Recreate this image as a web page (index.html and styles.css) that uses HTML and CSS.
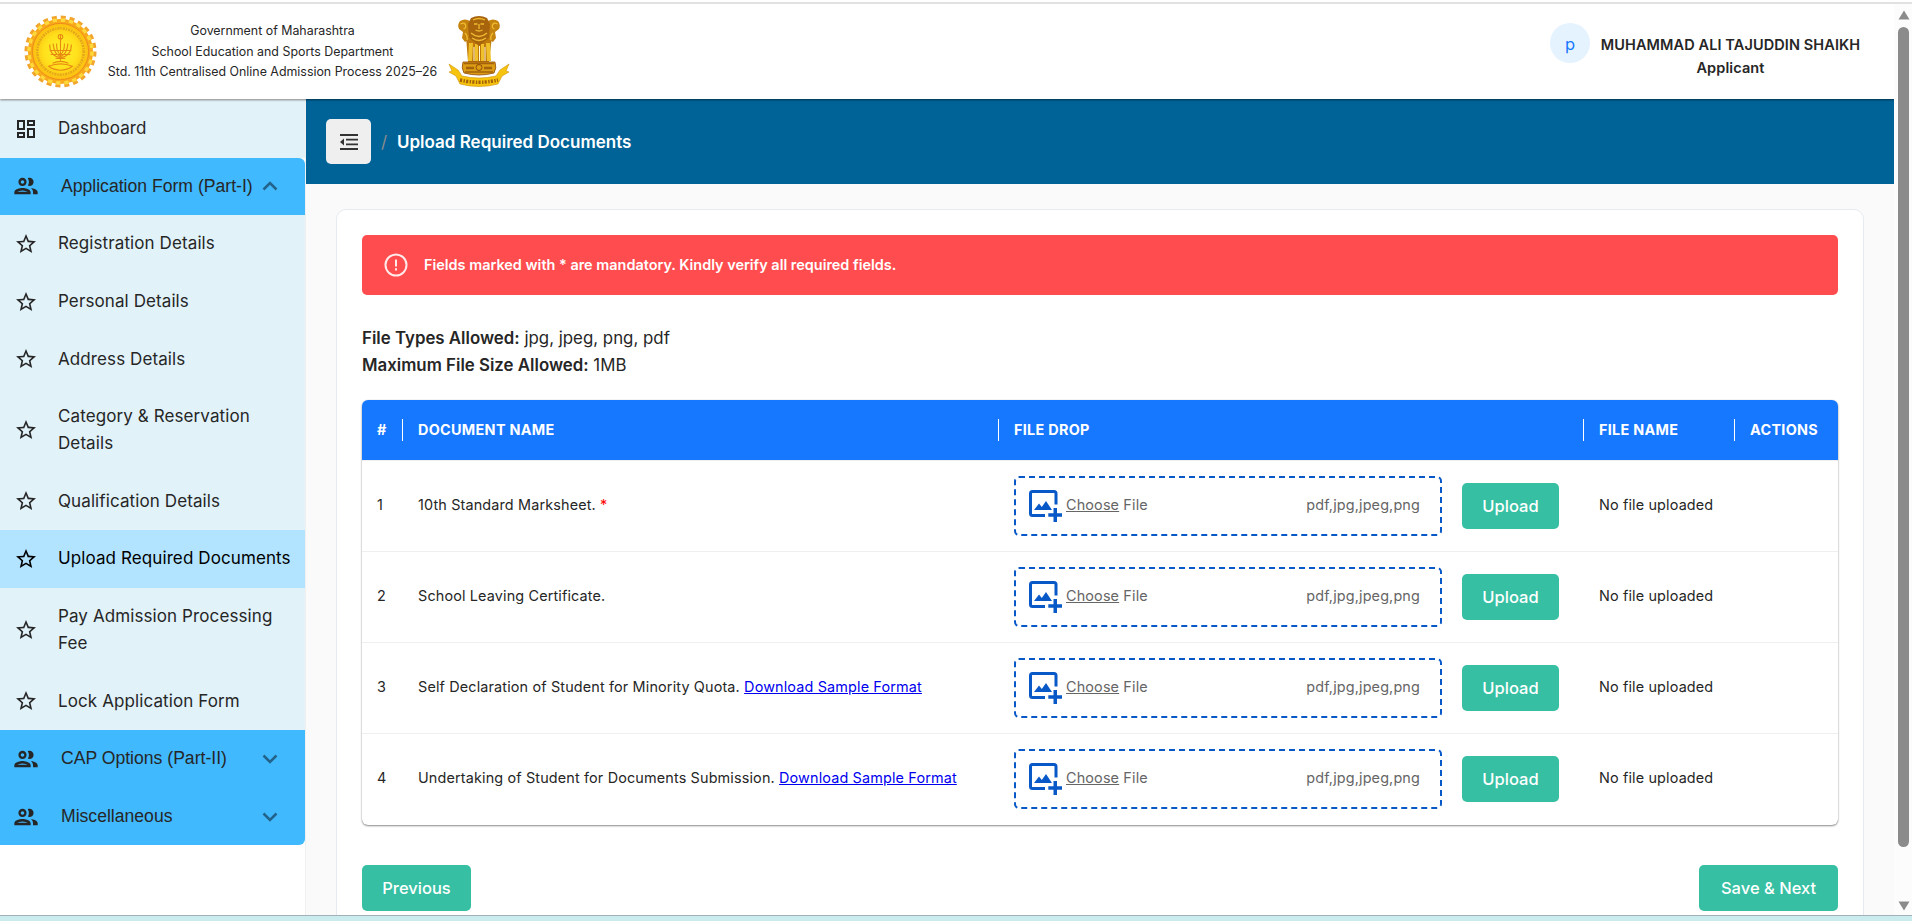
FILE: index.html
```html
<!DOCTYPE html>
<html lang="en">
<head>
<meta charset="utf-8">
<title>Upload Required Documents</title>
<link rel="stylesheet" href="styles.css">
</head>
<body>
<svg class="defs" width="0" height="0">
  <symbol id="star" viewBox="0 0 24 24"><path d="M22 9.24l-7.19-.62L12 2 9.19 8.63 2 9.24l5.46 4.73L5.82 21 12 17.27 18.18 21l-1.63-7.03L22 9.24zM12 15.4l-3.76 2.27 1-4.28-3.32-2.88 4.38-.38L12 6.1l1.71 4.04 4.38.38-3.32 2.88 1 4.28L12 15.4z"/></symbol>
  <symbol id="people" viewBox="0 0 24 24"><path d="M9 12c1.93 0 3.500-1.570 3.500-3.500S10.930 5 9 5 5.500 6.570 5.500 8.500 7.070 12 9 12zm0-5c.83 0 1.500.67 1.500 1.500S9.830 10 9 10s-1.500-.67-1.500-1.500S8.170 7 9 7zm0 6.750c-2.340 0-7 1.170-7 3.500V19h14v-1.750c0-2.330-4.660-3.500-7-3.500zM4.340 17c.84-.58 2.870-1.250 4.660-1.250s3.820.67 4.660 1.250H4.340zM16.040 13.810C17.200 14.650 18 15.770 18 17.250V19h4v-1.750c0-2.020-3.500-3.170-5.960-3.440zM15 12c1.930 0 3.500-1.570 3.500-3.500S16.930 5 15 5c-.54 0-1.040.13-1.500.35.63.89 1 1.980 1 3.150s-.37 2.260-1 3.150c.46.22.96.35 1.500.35z"/></symbol>
  <symbol id="chev" viewBox="0 0 16 10"><path d="M1.500 1.500L8 8l6.500-6.500" fill="none" stroke="currentColor" stroke-width="2.500"/></symbol>
  <symbol id="addimg" viewBox="0 0 34 34"><path d="M28 15.500V4.500Q28 2.500 26 2.500H4.500Q2.500 2.500 2.500 4.500V24.500Q2.500 26.500 4.500 26.500H17" fill="none" stroke="currentColor" stroke-width="3"/><path d="M6 21l5-6.500 2.800 3.500 4.200-6L24 21zM25.500 19h3.500v5.300h5.200v3.400H29V33h-3.500v-5.300h-5.200v-3.400h5.200z"/></symbol>
</svg>
<div class="topline"></div>
<div class="window">
  <div class="page">
    <header class="header">
      <svg class="seal" viewBox="0 0 74 74" preserveAspectRatio="none">
        <defs><radialGradient id="gold"><stop offset="0" stop-color="#fff22e"/><stop offset=".6" stop-color="#ffe01c"/><stop offset="1" stop-color="#fbbd10"/></radialGradient></defs>
        <circle cx="37" cy="37" r="33" fill="#f8a91c"/>
        <circle cx="37" cy="37" r="34" fill="none" stroke="#f2a52e" stroke-width="5" stroke-dasharray="5 3.900"/>
        <circle cx="37" cy="37" r="32" fill="none" stroke="#ffd93a" stroke-width="3.500" stroke-dasharray="4.400 3.980"/>
        <circle cx="37" cy="37" r="28.500" fill="url(#gold)" stroke="#ee8a1c" stroke-width="1"/>
        <circle cx="37" cy="37" r="23.500" fill="none" stroke="#e0a01c" stroke-width="2.600" stroke-dasharray="1.400 1 2.200 .9" opacity=".85"/>
        <g fill="none" stroke="#e88a12" stroke-width="1.100"><path d="M37 20v26M26 30q0 12 11 13 11-1 11-13M29.500 29q1 11 7.500 13 6.500-2 7.500-13M33 29q0 9 4 11 4-2 4-11M26 36h22M27 40h20M32 44h10M29 49q8-4 16 0M25 52q12-5 24 0-5 4-12 4t-12-4z"/><circle cx="37" cy="22" r="2.300"/></g>
      </svg>
      <div class="dept"><div class="d1">Government of Maharashtra</div><div class="d2">School Education and Sports Department</div><div class="d3">Std. 11th Centralised Online Admission Process 2025–26</div></div>
      <svg class="lions" viewBox="0 0 62 71">
        <path d="M18 20h26l-3 26H20z" fill="#c07a0c"/>
        <path d="M21 27h4l-1 18h-4zM27 28h3v17h-3zM33 28h3v17h-3zM38 27h4l1 18h-4z" fill="#f0c02a"/>
        <path d="M26 31v14M31.500 30v15M37 31v14" stroke="#fff6dc" stroke-width="1"/>
        <path d="M12 5q5-3 10 0v18l-5 3-3-4 1-6-4-3q-2-4 1-8zM50 5q-5-3-10 0v18l5 3 3-4-1-6 4-3q2-4-1-8z" fill="#c4820f"/>
        <path d="M23 2q8-4 16 0l3 6-1 14-10 8-10-8-1-14z" fill="#a8640d"/>
        <path d="M12.500 8q4-2 5 1t-2 4M49.500 8q-4-2-5 1t2 4M25 4q6-3 12 0M26 8h3.500M32.500 8H36M31 8v5M27.500 14q3.500 2 7 0M17 17q3 3 2 7M45 17q-3 3-2 7M23 17q8 7 16 0M24 22q7 5 14 0" stroke="#eebb30" stroke-width="1.300" fill="none"/>
        <path d="M15 46q-2 6 1 11 15 4 30 0 3-5 1-11z" fill="#dc9d14" stroke="#8f4a0b" stroke-width=".8"/>
        <path d="M16 47.500h30M17 56h28" stroke="#a3620c" stroke-width="1.500"/><circle cx="31" cy="51.500" r="3" fill="none" stroke="#8f4a0b"/><path d="M18 52h8M36 52h8" stroke="#a3620c" stroke-width="2.500"/>
        <path d="M1 48l9 6 4 6q17 4 34 0l4-6 9-6-3 7 3 1-7 4-4 8q-19 5-38 0l-4-8-7-4 3-1z" fill="#f6c40c" stroke="#d0920c" stroke-width=".6"/>
        <path d="M12 64q19 4.500 38 0" fill="none" stroke="#a4600a" stroke-width="3.500" stroke-dasharray="2.200 1.400 1.400 1.200"/>
      </svg>
      <div class="user"><span class="avatar">p</span><div class="who"><div class="name">MUHAMMAD ALI TAJUDDIN SHAIKH</div><div class="role">Applicant</div></div></div>
    </header>
    <div class="main">
      <nav class="side">
        <a class="item"><svg class="ico" viewBox="0 0 24 24"><path d="M19 5v2h-4V5h4M9 5v6H5V5h4m10 8v6h-4v-6h4M9 17v2H5v-2h4M21 3h-8v6h8V3zM11 3H3v10h8V3zm10 8h-8v10h8V11zm-10 4H3v6h8v-6z"/></svg><span>Dashboard</span></a>
        <a class="item group first"><svg class="ico wide"><use href="#people"/></svg><span>Application Form (Part-I)</span><svg class="chev up"><use href="#chev"/></svg></a>
        <a class="item"><svg class="ico"><use href="#star"/></svg><span>Registration Details</span></a>
        <a class="item"><svg class="ico"><use href="#star"/></svg><span>Personal Details</span></a>
        <a class="item"><svg class="ico"><use href="#star"/></svg><span>Address Details</span></a>
        <a class="item"><svg class="ico"><use href="#star"/></svg><span>Category &amp; Reservation<br>Details</span></a>
        <a class="item"><svg class="ico"><use href="#star"/></svg><span>Qualification Details</span></a>
        <a class="item active"><svg class="ico"><use href="#star"/></svg><span>Upload Required Documents</span></a>
        <a class="item"><svg class="ico"><use href="#star"/></svg><span>Pay Admission Processing<br>Fee</span></a>
        <a class="item"><svg class="ico"><use href="#star"/></svg><span>Lock Application Form</span></a>
        <a class="item group"><svg class="ico wide"><use href="#people"/></svg><span>CAP Options (Part-II)</span><svg class="chev"><use href="#chev"/></svg></a>
        <a class="item group last"><svg class="ico wide"><use href="#people"/></svg><span>Miscellaneous</span><svg class="chev"><use href="#chev"/></svg></a>
      </nav>
      <main class="content">
        <div class="crumb"><button class="toggle"><svg viewBox="0 0 18 18"><path d="M0 1h18v2H0zM6 5.800h12v1.700H6zM6 10.500h12v1.700H6zM0 15h18v2H0zM4 5.500v7L0 9z"/></svg></button><span class="slash">/</span><span class="title">Upload Required Documents</span></div>
        <section class="card">
          <div class="alert"><svg viewBox="0 0 24 24"><circle cx="12" cy="12" r="10.500" fill="none" stroke="#ffe9e9" stroke-width="2"/><path d="M11 6.500h2v7h-2zM11 15.300h2v2.200h-2z" fill="#ffe9e9"/></svg><span>Fields marked with * are mandatory. Kindly verify all required fields.</span></div>
          <div class="info"><div><b>File Types Allowed:</b> jpg, jpeg, png, pdf</div><div><b>Maximum File Size Allowed:</b> 1MB</div></div>
          <div class="table">
            <div class="row head"><div>#</div><div>DOCUMENT NAME</div><div>FILE DROP</div><div>FILE NAME</div><div>ACTIONS</div></div>
            <div class="row"><div>1</div><div>10th Standard Marksheet. <i>*</i></div><div class="pick"><div class="drop"><svg><use href="#addimg"/></svg><span><u>Choose</u> File</span><span class="ext">pdf,jpg,jpeg,png</span></div><button class="btn">Upload</button></div><div>No file uploaded</div><div></div></div>
            <div class="row"><div>2</div><div>School Leaving Certificate.</div><div class="pick"><div class="drop"><svg><use href="#addimg"/></svg><span><u>Choose</u> File</span><span class="ext">pdf,jpg,jpeg,png</span></div><button class="btn">Upload</button></div><div>No file uploaded</div><div></div></div>
            <div class="row"><div>3</div><div>Self Declaration of Student for Minority Quota. <a href="#">Download Sample Format</a></div><div class="pick"><div class="drop"><svg><use href="#addimg"/></svg><span><u>Choose</u> File</span><span class="ext">pdf,jpg,jpeg,png</span></div><button class="btn">Upload</button></div><div>No file uploaded</div><div></div></div>
            <div class="row"><div>4</div><div>Undertaking of Student for Documents Submission. <a href="#">Download Sample Format</a></div><div class="pick"><div class="drop"><svg><use href="#addimg"/></svg><span><u>Choose</u> File</span><span class="ext">pdf,jpg,jpeg,png</span></div><button class="btn">Upload</button></div><div>No file uploaded</div><div></div></div>
          </div>
          <div class="foot"><button class="btn prev">Previous</button><button class="btn next">Save &amp; Next</button></div>
        </section>
      </main>
    </div>
  </div>
  <div class="scroll"><svg width="12" height="10" viewBox="0 0 12 10"><path d="M6 .5L11.500 9.500H.5z"/></svg><div class="thumb"></div><svg width="12" height="10" viewBox="0 0 12 10"><path d="M6 9.500L11.500.5H.5z"/></svg></div>
</div>
<div class="bottom"></div>
</body>
</html>
```
FILE: styles.css
```css
* { box-sizing: border-box; }
body { margin: 0; height: 921px; overflow: hidden; background: #fff; color: #262626; font-family: Inter, "Open Sans", sans-serif; font-size: 14px; display: flex; flex-direction: column; padding-top: 2px; }
.defs { position: absolute; }
svg { fill: currentColor; flex: none; }
.topline { height: 2px; background: #e1e1e1; flex: none; }
.window { display: flex; height: 911px; flex: none; }
.page { width: 1894px; flex: none; display: flex; flex-direction: column; overflow: hidden; }
.bottom { height: 6px; flex: none; background: #caecee; border-top: 1px solid #a0b2b7; }

.header { height: 95px; flex: none; display: flex; align-items: flex-start; background: #fff; box-shadow: 0 1px 2px rgba(0,0,0,.5); position: relative; padding-left: 24px; }
.seal { width: 73px; height: 73px; margin-top: 11px; }
.dept { width: 351px; padding-top: 17px; text-align: center; font-size: 12.400px; line-height: 20.600px; white-space: nowrap; }
.lions { width: 62px; height: 71px; margin-top: 12px; }
.user { display: flex; margin-left: auto; margin-right: 33px; gap: 10px; padding-top: 19px; }
.avatar { width: 40px; height: 40px; border-radius: 50%; background: #e5f3ff; color: #1677ff; display: flex; align-items: center; justify-content: center; font-size: 16.500px; padding-top: 2px; }
.who { width: 261px; text-align: center; font-size: 14.500px; letter-spacing: .1px; font-weight: 600; line-height: 23.400px; padding-top: 10px; white-space: nowrap; }

.main { display: flex; flex: 1; min-height: 0; }
.side { width: 306px; flex: none; border-right: 1px solid #f0f0f0; background: #fff; padding-top: 1px; }
.item { min-height: 57.500px; padding: 15.200px 0; display: flex; align-items: center; background: #e1f2f9; line-height: 27.200px; font-size: 17px; letter-spacing: .1px; width: 305px; white-space: nowrap; }
.ico { width: 24px; height: 24px; margin: 0 20.500px 0 13.500px; }
.wide { width: 28px; height: 28px; margin: -2px 21.500px -2px 11.500px; }
.group { background: #40b9ff; font-family: "Liberation Sans", Arial, sans-serif; font-size: 17.600px; letter-spacing: 0; }
.group span { width: 201px; }
.first { border-top-right-radius: 6px; }
.last { border-bottom-right-radius: 6px; }
.active { background: #b3e4ff; color: #000; }
.chev { width: 16px; height: 10px; color: #23638a; }
.up { transform: rotate(180deg); }

.content { flex: 1; background: #fafafa; }
.crumb { height: 85px; background: #006398; display: flex; align-items: center; padding-left: 20px; color: #fff; }
.toggle { width: 45px; height: 45px; border: 0; border-radius: 5px; background: #efefef; padding: 0; display: flex; align-items: center; justify-content: center; color: #333; }
.toggle svg { width: 18px; height: 18px; }
.slash { width: 26px; padding-left: 10px; color: #8c8c8c; font-size: 17px; }
.title { font-size: 17px; font-weight: 600; }
.card { margin: 25px 30px 0; height: 800px; border: 1px solid #e6ebf1; border-radius: 10px; background: #fff; padding: 25px 25px 0; }
.alert { height: 60px; border-radius: 5px; background: #ff4d4f; color: #fff; display: flex; align-items: center; padding-left: 22px; gap: 16px; font-size: 14.450px; font-weight: 600; }
.alert svg { width: 24px; height: 24px; }
.alert span { padding-bottom: 1px; }
.info { margin-top: 30px; font-size: 16.850px; line-height: 27.200px; height: 75px; }
b { font-weight: 600; }
.table { border-radius: 6px; box-shadow: 0 1px 2px rgba(0,0,0,.45), 0 0 1px rgba(0,0,0,.2); height: 425px; font-size: 14.400px; letter-spacing: .15px; }
.row { display: grid; grid-template-columns: 41px 596px 585px 151px 103px; height: 91px; align-items: center; border-top: 1px solid #efefef; }
.row > div { padding: 0 0 4px 15px; white-space: nowrap; }
.head { height: 60px; background: #1677ff; color: #fff; border: 0; border-radius: 6px 6px 0 0; font-weight: 700; letter-spacing: .3px; }
.head > div { height: 22px; line-height: 21px; border-right: 1px solid #fff; padding-bottom: 0; }
.head > div:last-child { border: 0; }
i { color: #f00; font-style: normal; }
.row a { color: #00e; }
.row .pick { display: flex; align-items: center; padding-bottom: 0; }
.drop { width: 428px; height: 60px; border: 2px dashed #0958c8; border-radius: 5px; display: flex; align-items: center; padding: 0 20px 0 12px; color: #666; margin-right: 20px; }
.drop svg { width: 34px; height: 34px; color: #0958c8; margin-right: 4px; }
.drop span { padding-bottom: 3px; }
.ext { margin-left: auto; }
.btn { width: 97px; height: 46px; border: 0; border-radius: 5px; background: #36bfa3; color: #fff; font: 500 16.500px Inter, sans-serif; padding: 0 0 1px; }
.foot { display: flex; justify-content: space-between; margin-top: 40px; }
.prev { width: 109px; }
.next { width: 139px; }

.scroll { width: 18px; background: #fcfcfc; display: flex; flex-direction: column; align-items: center; color: #8b8b8b; padding-top: 6px; padding-left: 1px; }
.thumb { width: 11px; height: 820px; border-radius: 6px; background: #8b8b8b; margin: 7px 0 54px; }
```
